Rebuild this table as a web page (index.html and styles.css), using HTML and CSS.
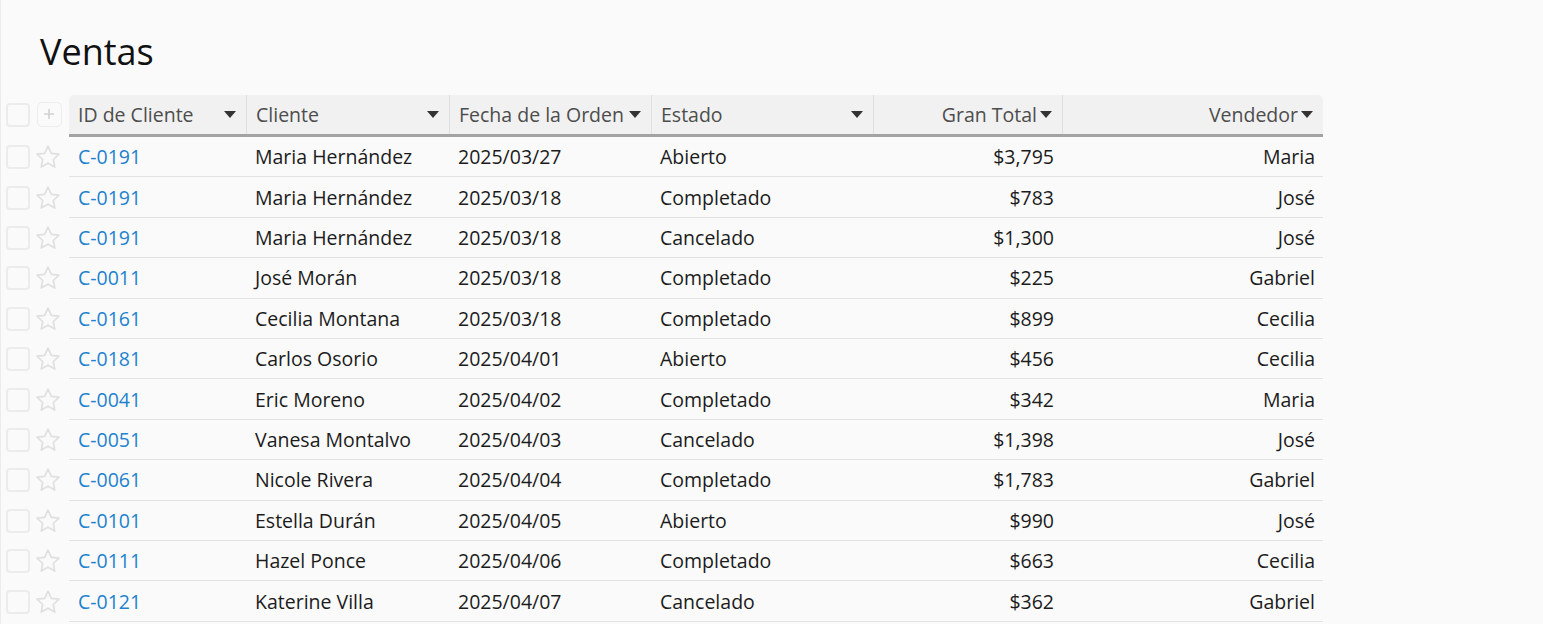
FILE: index.html
```html
<!DOCTYPE html>
<html lang="es">
<head>
<meta charset="utf-8">
<title>Ventas</title>
<link rel="stylesheet" href="styles.css">
</head>
<body>
<div class="page">
  <h1 class="title">Ventas</h1>
  <div class="table">
    <div class="row head-row">
      <div class="gutter">
        <span class="check"></span>
        <span class="plus"><svg viewBox="0 0 25 25" width="23" height="23"><path d="M12 6.5v11M6.5 12h11" stroke="#d2d2d2" stroke-width="1.8" fill="none"/></svg></span>
      </div>
      <div class="cells">
        <div class="th"><span class="label">ID de Cliente</span><span class="caret"></span></div>
        <div class="th"><span class="label">Cliente</span><span class="caret"></span></div>
        <div class="th"><span class="label">Fecha de la Orden</span><span class="caret"></span></div>
        <div class="th"><span class="label">Estado</span><span class="caret"></span></div>
        <div class="th right"><span class="label">Gran Total</span><span class="caret"></span></div>
        <div class="th right"><span class="label">Vendedor</span><span class="caret"></span></div>
      </div>
    </div>
    <div id="body"></div>
  </div>
</div>
<script src="app.js"></script>
</body>
</html>
```

FILE: app.js
```js
const rows = [
  ["C-0191","Maria Hernández","2025/03/27","Abierto","$3,795","Maria"],
  ["C-0191","Maria Hernández","2025/03/18","Completado","$783","José"],
  ["C-0191","Maria Hernández","2025/03/18","Cancelado","$1,300","José"],
  ["C-0011","José Morán","2025/03/18","Completado","$225","Gabriel"],
  ["C-0161","Cecilia Montana","2025/03/18","Completado","$899","Cecilia"],
  ["C-0181","Carlos Osorio","2025/04/01","Abierto","$456","Cecilia"],
  ["C-0041","Eric Moreno","2025/04/02","Completado","$342","Maria"],
  ["C-0051","Vanesa Montalvo","2025/04/03","Cancelado","$1,398","José"],
  ["C-0061","Nicole Rivera","2025/04/04","Completado","$1,783","Gabriel"],
  ["C-0101","Estella Durán","2025/04/05","Abierto","$990","José"],
  ["C-0111","Hazel Ponce","2025/04/06","Completado","$663","Cecilia"],
  ["C-0121","Katerine Villa","2025/04/07","Cancelado","$362","Gabriel"]
];
const star = '<svg class="star" viewBox="0 0 26 24" width="26" height="24"><path d="M13 1.2l3.3 7.1 7.7.9-5.7 5.3 1.5 7.6L13 18.2l-6.8 3.9 1.5-7.6L2 9.2l7.7-.9z" fill="none" stroke="#e0e0e0" stroke-width="1.7" stroke-linejoin="round"/></svg>';
const body = document.getElementById("body");
body.innerHTML = rows.map(r => `
  <div class="row data-row">
    <div class="gutter"><span class="check"></span>${star}</div>
    <div class="cells">
      <div class="td"><a class="link" href="#">${r[0]}</a></div>
      <div class="td">${r[1]}</div>
      <div class="td">${r[2]}</div>
      <div class="td">${r[3]}</div>
      <div class="td right">${r[4]}</div>
      <div class="td right">${r[5]}</div>
    </div>
  </div>`).join("");
```

FILE: styles.css
```css
html, body {
  margin: 0;
  padding: 0;
  background: #fafafa;
}
body {
  font-family: "Open Sans", "Noto Sans", sans-serif;
  color: #1c1c1c;
  border-left: 1px solid #ececec;
  min-height: 624px;
  box-sizing: border-box;
}
.page {
  padding-top: 27px;
}
.title {
  margin: 0 0 19px 39px;
  font-size: 36px;
  font-weight: 400;
  line-height: 49px;
  color: #111;
}
.row {
  display: flex;
}
.gutter {
  width: 68px;
  flex: none;
  display: flex;
  align-items: center;
  gap: 5px;
  padding-left: 5px;
  box-sizing: border-box;
}
.check {
  width: 24px;
  height: 24px;
  box-sizing: border-box;
  border: 2px solid #ececec;
  border-radius: 4px;
  flex: none;
}
.plus {
  width: 25px;
  height: 25px;
  box-sizing: border-box;
  border: 1px solid #ededed;
  border-radius: 5px;
  margin-left: 2px;
  flex: none;
  display: flex;
  align-items: center;
  justify-content: center;
}
.plus svg {
  display: block;
}
.star {
  display: block;
  flex: none;
}
.cells {
  display: grid;
  grid-template-columns: 177px 203px 202px 222px 189px 261px;
}
.head-row .cells {
  background: #f1f1f1;
  border-bottom: 3px solid #a3a3a3;
  border-radius: 5px 5px 0 0;
  height: 42px;
  box-sizing: border-box;
}
.head-row .gutter {
  height: 42px;
  padding-bottom: 3px;
}
.th {
  display: flex;
  align-items: center;
  padding: 0 10px 0 9px;
  font-size: 19.5px;
  color: #4d4d4d;
  border-left: 1px solid #e0e0e0;
  white-space: nowrap;
}
.th:first-child {
  border-left: none;
}
.th .label {
  flex: 1;
}
.th.right .label {
  text-align: right;
}
.caret {
  width: 0;
  height: 0;
  border-left: 6.5px solid transparent;
  border-right: 6.5px solid transparent;
  border-top: 7px solid #333;
  margin-left: 3px;
  flex: none;
}
.data-row {
  height: 40.42px;
}
.data-row .cells {
  border-bottom: 1px solid #e2e2e2;
  box-sizing: border-box;
}
.td {
  display: flex;
  align-items: center;
  padding: 0 8px 0 9px;
  font-size: 19.5px;
  white-space: nowrap;
}
.td.right {
  justify-content: flex-end;
}
.link {
  color: #1e82cf;
  text-decoration: none;
}
```
